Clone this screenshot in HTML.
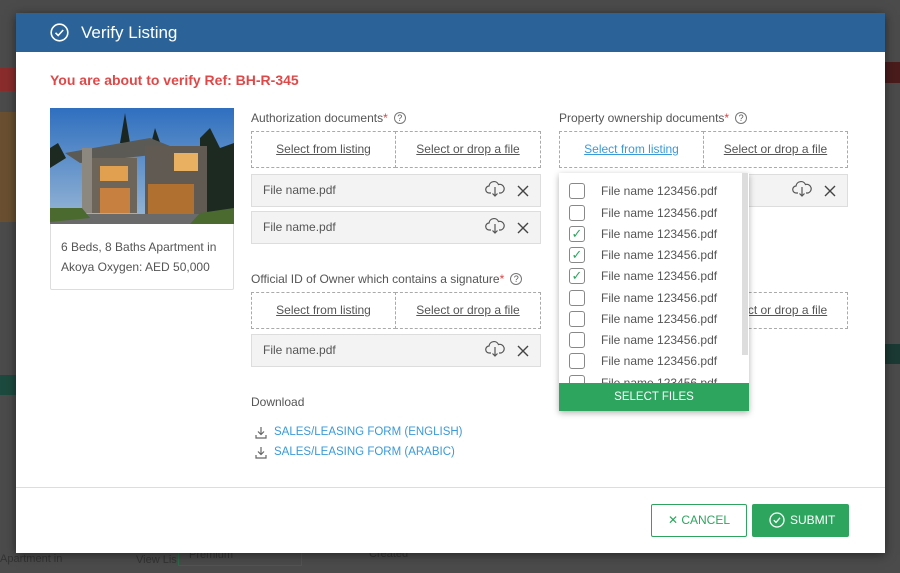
<!DOCTYPE html>
<html><head><meta charset="utf-8"><style>
*{box-sizing:border-box;margin:0;padding:0}
body{width:900px;height:573px;overflow:hidden;background:#4b4b4b;font-family:"Liberation Sans",sans-serif;position:relative;color:#555}
.a{position:absolute}
.modal{left:16px;top:13px;width:869px;height:540px;background:#fff;box-shadow:0 2px 10px rgba(0,0,0,.5)}
.hdr{left:16px;top:13px;width:869px;height:39px;background:#2b6398;color:#fff;font-size:17px}
.lbl{font-size:12px;color:#555}
.lbl i{color:#e04040;font-style:normal}
.q{display:inline-block;width:12px;height:12px;border:1px solid #777;border-radius:50%;font-size:9px;text-align:center;line-height:11px;margin-left:6px;vertical-align:1px}
.box{border:1px dashed #aaa;height:37px;font-size:12px;color:#555;text-align:center;line-height:35px;text-decoration:underline}
.file{background:#f3f3f3;border:1px solid #ddd;height:33px;font-size:12px;color:#555;padding-left:11px;line-height:31px}
.cb{position:absolute;left:10px;width:16px;height:16px;border:1px solid #888;border-radius:3px}
.fn{position:absolute;left:42px;font-size:12px;color:#555}
</style></head><body>
<div class="a" style="left:0;top:68px;width:16px;height:23px;background:#8a2c2c"></div>
<div class="a" style="left:885px;top:62px;width:15px;height:21px;background:#4a1c1c"></div>
<div class="a" style="left:0;top:375px;width:16px;height:20px;background:#1d4a3e"></div>
<div class="a" style="left:885px;top:344px;width:15px;height:20px;background:#1b3a33"></div>
<div class="a" style="left:0;top:112px;width:16px;height:110px;background:#6a5030"></div>
<div class="a" style="left:0;top:553px;font-size:11px;color:#333">Apartment in</div>
<div class="a" style="left:136px;top:554px;font-size:11px;color:#333">View Lis</div>
<div class="a" style="left:178px;top:548px;width:124px;height:18px;border:1px solid #2a6a4a;font-size:11px;color:#333;padding-left:10px">Premium</div>
<div class="a" style="left:369px;top:548px;font-size:11px;color:#333">Created</div>
<div class="a modal"></div>
<div class="a hdr">
 <svg class="a" style="left:34px;top:10px" width="19" height="19" viewBox="0 0 19 19"><circle cx="9.5" cy="9.5" r="8.3" fill="none" stroke="#fff" stroke-width="1.6"/><path d="M5.5 9.8l2.7 2.7 5-5.5" fill="none" stroke="#fff" stroke-width="1.6"/></svg>
 <div class="a" style="left:65px;top:10px">Verify Listing</div>
</div>
<div class="a" style="left:50px;top:72px;font-size:14px;font-weight:bold;color:#e04848">You are about to verify Ref: BH-R-345</div>

<div class="a" style="left:50px;top:108px;width:184px;height:182px;border:1px solid #ddd;border-radius:2px"></div>
<svg class="a" style="left:50px;top:108px" width="184" height="116" viewBox="0 0 184 116">
<defs><linearGradient id="sk" x1="0" y1="0" x2="0" y2="1"><stop offset="0" stop-color="#2f6fbf"/><stop offset="1" stop-color="#9ab8d6"/></linearGradient></defs>
<rect width="184" height="116" fill="url(#sk)"/>
<path d="M0 40 L8 35 L16 50 L0 60Z M150 30 L160 20 L170 40 L184 35 L184 116 L150 116Z" fill="#1d2a22"/>
<path d="M75 5 L70 35 L80 35Z M105 20 L100 40 L112 40Z" fill="#1b2620"/>
<path d="M15 45 L100 30 L125 40 L120 45 L30 55Z" fill="#5b5a55"/>
<rect x="32" y="50" width="55" height="55" fill="#6d655a"/>
<rect x="95" y="38" width="62" height="68" fill="#605a52"/>
<rect x="32" y="40" width="10" height="65" fill="#8c8880"/>
<rect x="50" y="58" width="28" height="15" fill="#e0a050"/>
<rect x="124" y="45" width="24" height="18" fill="#e8b060"/>
<rect x="98" y="76" width="46" height="30" fill="#b07030"/>
<rect x="50" y="80" width="30" height="25" fill="#c88040"/>
<path d="M0 106 L184 106 L184 116 L0 116Z" fill="#6a6a6a"/>
<path d="M0 100 L32 100 L40 110 L0 114Z M150 105 L184 100 L184 116 L140 116Z" fill="#4a6a30"/>
</svg>
<div class="a" style="left:61px;top:237px;font-size:12px;line-height:20px;color:#555">6 Beds, 8 Baths Apartment in<br>Akoya Oxygen: AED 50,000</div>

<div class="a lbl" style="left:251px;top:111px">Authorization documents<i>*</i><span class="q">?</span></div>
<div class="a box" style="left:251px;top:131px;width:145px">Select from listing</div>
<div class="a box" style="left:395px;top:131px;width:146px">Select or drop a file</div>
<div class="a file" style="left:251px;top:174px;width:290px">File name.pdf</div>
<div class="a file" style="left:251px;top:211px;width:290px">File name.pdf</div>

<div class="a lbl" style="left:251px;top:272px">Official ID of Owner which contains a signature<i>*</i><span class="q">?</span></div>
<div class="a box" style="left:251px;top:292px;width:145px">Select from listing</div>
<div class="a box" style="left:395px;top:292px;width:146px">Select or drop a file</div>
<div class="a file" style="left:251px;top:334px;width:290px">File name.pdf</div>

<div class="a lbl" style="left:559px;top:111px">Property ownership documents<i>*</i><span class="q">?</span></div>
<div class="a box" style="left:559px;top:131px;width:145px;color:#3a9ad9">Select from listing</div>
<div class="a box" style="left:703px;top:131px;width:145px">Select or drop a file</div>
<div class="a file" style="left:559px;top:174px;width:289px"></div>
<div class="a box" style="left:703px;top:292px;width:145px">Select or drop a file</div>

<svg width="0" height="0" style="position:absolute"><defs><g id="cl"><path d="M6 14 H4.5 A3.5 3.5 0 0 1 4 7 A5 5 0 0 1 13.5 5.5 A4 4 0 0 1 16 14 H14" fill="none" stroke="#555" stroke-width="1.2"/><path d="M10 8 V17 M7.5 14.5 L10 17 L12.5 14.5" fill="none" stroke="#555" stroke-width="1.2"/></g><g id="x"><path d="M2 2 L12 12 M12 2 L2 12" stroke="#444" stroke-width="1.4"/></g></defs></svg>
<svg class="a" style="left:485px;top:179px" width="20" height="20"><use href="#cl"/></svg>
<svg class="a" style="left:516px;top:184px" width="14" height="14"><use href="#x"/></svg>
<svg class="a" style="left:485px;top:216px" width="20" height="20"><use href="#cl"/></svg>
<svg class="a" style="left:516px;top:221px" width="14" height="14"><use href="#x"/></svg>
<svg class="a" style="left:485px;top:339px" width="20" height="20"><use href="#cl"/></svg>
<svg class="a" style="left:516px;top:344px" width="14" height="14"><use href="#x"/></svg>
<svg class="a" style="left:792px;top:179px" width="20" height="20"><use href="#cl"/></svg>
<svg class="a" style="left:823px;top:184px" width="14" height="14"><use href="#x"/></svg>

<div class="a lbl" style="left:251px;top:395px">Download</div>
<svg class="a" style="left:255px;top:426px" width="12" height="13"><path d="M6 1 V8 M3 5.5 L6 8.5 L9 5.5 M1 9 V12 H11 V9" fill="none" stroke="#666" stroke-width="1.2"/></svg>
<div class="a" style="left:274px;top:426px;font-size:11.5px;color:#3a9ad9">SALES/LEASING FORM (ENGLISH)</div>
<svg class="a" style="left:255px;top:446px" width="12" height="13"><path d="M6 1 V8 M3 5.5 L6 8.5 L9 5.5 M1 9 V12 H11 V9" fill="none" stroke="#666" stroke-width="1.2"/></svg>
<div class="a" style="left:274px;top:446px;font-size:11.5px;color:#3a9ad9">SALES/LEASING FORM (ARABIC)</div>

<div class="a" style="left:559px;top:173px;width:190px;height:238px;background:#fff;box-shadow:0 2px 6px rgba(0,0,0,.3);overflow:hidden">
 <div class="a" style="left:183px;top:0;width:6px;height:182px;background:#ddd"></div>
 <div class="cb" style="top:10px"></div><div class="fn" style="top:11px">File name 123456.pdf</div>
 <div class="cb" style="top:32px"></div><div class="fn" style="top:33px">File name 123456.pdf</div>
 <div class="cb" style="top:53px;color:#2ea55f;font-size:13px;line-height:14px;text-align:center">✓</div><div class="fn" style="top:54px">File name 123456.pdf</div>
 <div class="cb" style="top:74px;color:#2ea55f;font-size:13px;line-height:14px;text-align:center">✓</div><div class="fn" style="top:75px">File name 123456.pdf</div>
 <div class="cb" style="top:95px;color:#2ea55f;font-size:13px;line-height:14px;text-align:center">✓</div><div class="fn" style="top:96px">File name 123456.pdf</div>
 <div class="cb" style="top:117px"></div><div class="fn" style="top:118px">File name 123456.pdf</div>
 <div class="cb" style="top:138px"></div><div class="fn" style="top:139px">File name 123456.pdf</div>
 <div class="cb" style="top:159px"></div><div class="fn" style="top:160px">File name 123456.pdf</div>
 <div class="cb" style="top:180px"></div><div class="fn" style="top:181px">File name 123456.pdf</div>
 <div class="cb" style="top:202px"></div><div class="fn" style="top:203px">File name 123456.pdf</div>
 <div class="a" style="left:0;top:210px;width:190px;height:28px;background:#2ea55f;color:#fff;font-size:11.5px;text-align:center;line-height:28px">SELECT FILES</div>
</div>

<div class="a" style="left:16px;top:487px;width:869px;height:1px;background:#ddd"></div>
<div class="a" style="left:651px;top:504px;width:96px;height:33px;border:1px solid #2ea55f;border-radius:2px;color:#2ea55f;font-size:12px;text-align:center;line-height:31px">✕ CANCEL</div>
<div class="a" style="left:752px;top:504px;width:97px;height:33px;background:#2ea55f;border-radius:2px;color:#fff;font-size:12px;line-height:33px;padding-left:38px">SUBMIT</div>
<svg class="a" style="left:769px;top:512px" width="16" height="16"><circle cx="8" cy="8" r="7" fill="none" stroke="#fff" stroke-width="1.3"/><path d="M4.8 8.2 L7 10.4 L11 5.8" fill="none" stroke="#fff" stroke-width="1.3"/></svg>
</body></html>
